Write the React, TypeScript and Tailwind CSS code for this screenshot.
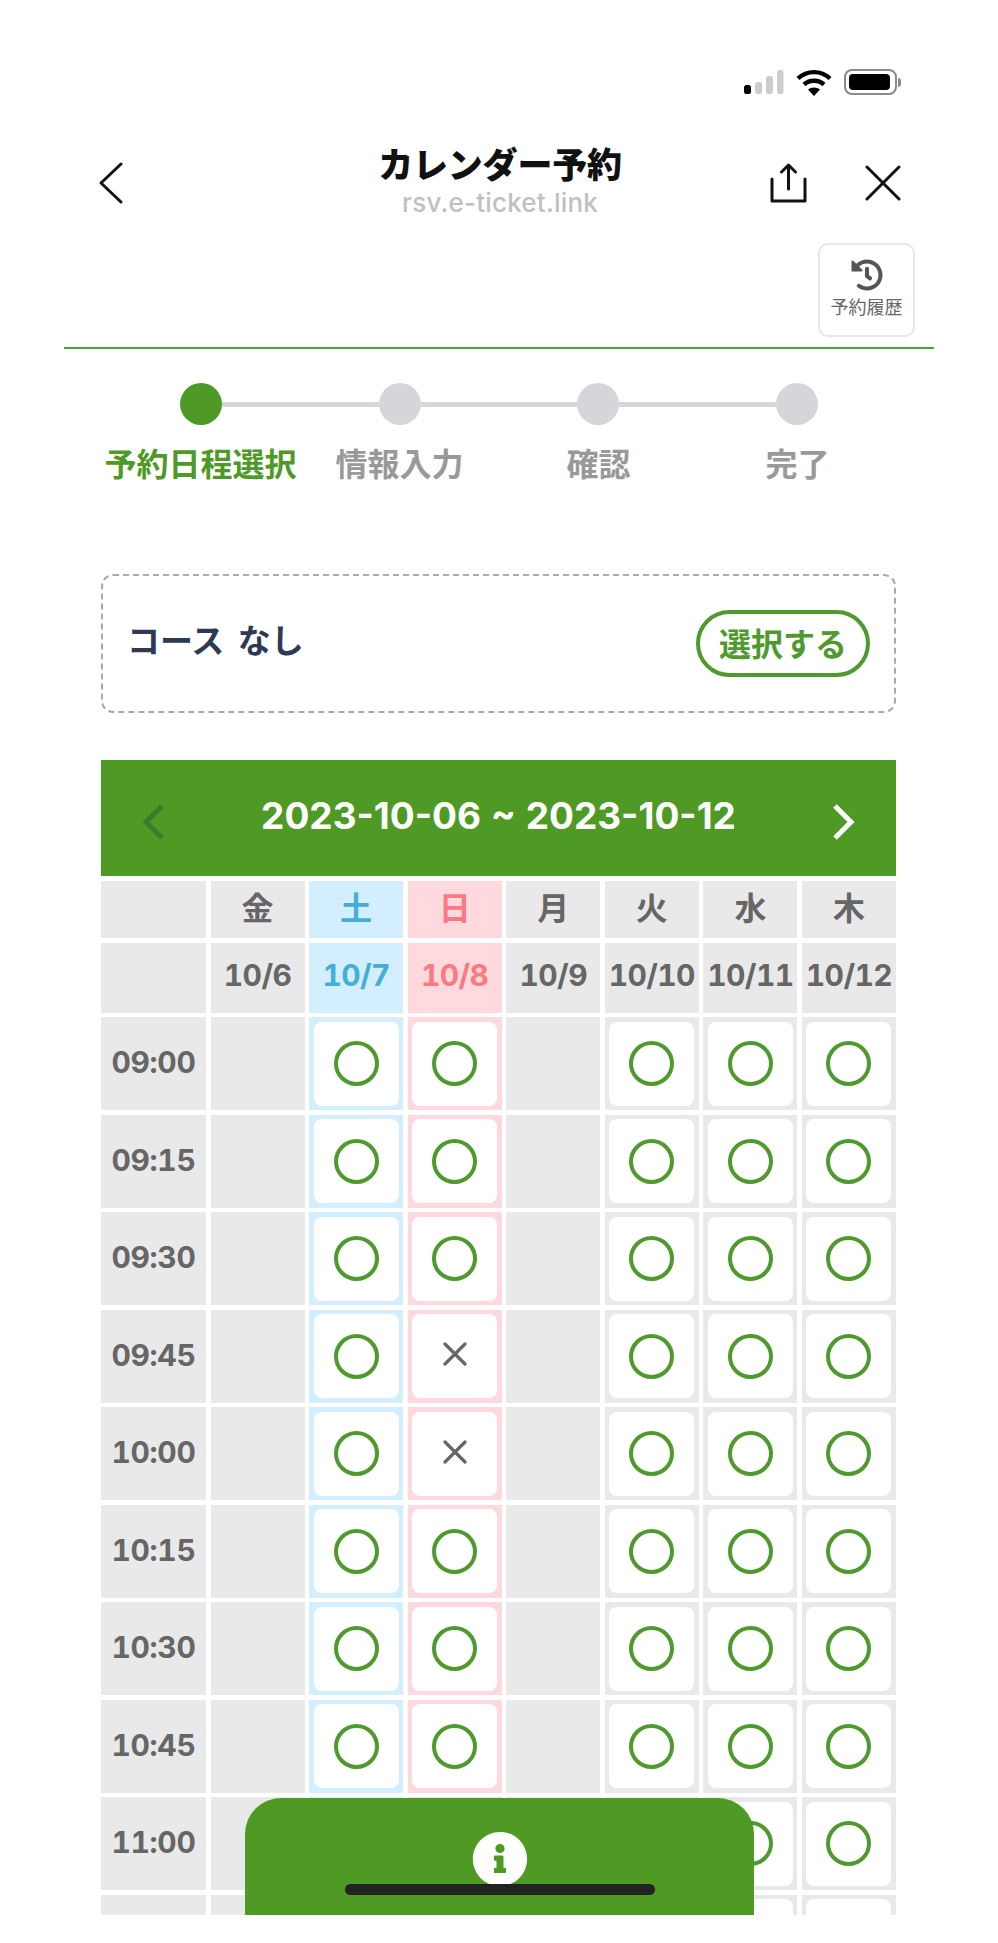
import { FaHistory, FaInfoCircle } from "react-icons/fa";

const FONT = "font-['Noto_Sans_CJK_JP','Noto_Sans',sans-serif]";
// latin-first stack for the digits in the calendar
const DIGITS = "font-['Inter','Noto_Sans_CJK_JP',sans-serif]";

const DAYS = [
  { label: "金", date: "10/6", tone: "gray", open: false },
  { label: "土", date: "10/7", tone: "blue", open: true },
  { label: "日", date: "10/8", tone: "pink", open: true },
  { label: "月", date: "10/9", tone: "gray", open: false },
  { label: "火", date: "10/10", tone: "gray", open: true },
  { label: "水", date: "10/11", tone: "gray", open: true },
  { label: "木", date: "10/12", tone: "gray", open: true },
] as const;

// the last row runs under the bottom edge, its label is never on screen
const TIMES = ["09:00", "09:15", "09:30", "09:45", "10:00", "10:15", "10:30", "10:45", "11:00", ""];
const FULL = ["10/8 09:45", "10/8 10:00"];

const STEPS = ["予約日程選択", "情報入力", "確認", "完了"];

const TONE = {
  gray: "bg-[#e9e9e9] text-[#666666]",
  blue: "bg-[#d2eeff] text-[#45aed6]",
  pink: "bg-[#ffd9dd] text-[#fb7a82]",
};

function StatusBar() {
  return (
    <div className="flex justify-end items-center gap-[12px] pt-[69px] pr-[97px] h-[95px]">
      <svg width="40" height="25" viewBox="0 0 40 25">
        <rect x="0" y="15" width="7" height="9" rx="2.5" fill="#000" />
        <rect x="11" y="12" width="7" height="12" rx="2.5" fill="#ccc" />
        <rect x="22" y="6" width="7" height="18" rx="2.5" fill="#ccc" />
        <rect x="33" y="0" width="6.5" height="24" rx="2.5" fill="#ccc" />
      </svg>
      <svg width="36" height="27" viewBox="0 0 36 27" fill="none" stroke="#000" strokeWidth="4.4">
        <path d="M2 9.5C11 1 25 1 34 9.5" />
        <path d="M8 15.5C13.5 10.5 22.5 10.5 28 15.5" />
        <path d="M18 27l-6-6.5c3.2-2.8 8.8-2.8 12 0z" fill="#000" stroke="none" />
      </svg>
      <div className="flex items-center gap-[1px]">
        <div className="w-[53px] h-[26px] rounded-[8px] border-2 border-[#8a8a8a] p-[3px]">
          <div className="h-full w-[41px] rounded-[4px] bg-black" />
        </div>
        <div className="w-[3px] h-[9px] rounded-r-full bg-[#8a8a8a]" />
      </div>
    </div>
  );
}

function NavBar() {
  return (
    <div className="grid grid-cols-[1fr_auto_1fr] items-start pl-[99px] pr-[97px] mt-[50px] h-[98px]">
      <svg className="mt-[17px]" width="24" height="42" viewBox="0 0 24 42" fill="none" stroke="#111" strokeWidth="3" strokeLinecap="round" strokeLinejoin="round">
        <path d="M22 2 2 21l20 19" />
      </svg>
      <div className="flex flex-col items-center -mt-[5px]">
        <div className="text-[35px] leading-[46px] font-black tracking-[-0.2px] text-[#111]">カレンダー予約</div>
        <div className="text-[26px] leading-[33px] font-medium text-[#c0c0c0] font-['Inter',sans-serif] tracking-[0.2px]">
          rsv.e-ticket.link
        </div>
      </div>
      <div className="flex justify-end items-start gap-[58px] pt-[18px]">
        <svg width="37" height="40" viewBox="0 0 37 40" fill="none" stroke="#111" strokeWidth="3" strokeLinecap="round" strokeLinejoin="round">
          <path d="M2 16v22h33V16" />
          <path d="M18.5 26V2M11.5 9l7-7 7 7" />
        </svg>
        <svg className="mt-[2px]" width="36" height="36" viewBox="0 0 36 36" fill="none" stroke="#111" strokeWidth="3" strokeLinecap="round">
          <path d="M2 2l32 32M34 2 2 34" />
        </svg>
      </div>
    </div>
  );
}

function Stepper() {
  return (
    <div className="px-[101px] mt-[34px]">
      <div className="flex items-center px-[79px]">
        {STEPS.map((_, i) => (
          <div key={i} className={i < 3 ? "flex items-center flex-1" : "flex items-center"}>
            <div className={`w-[42px] h-[42px] rounded-full shrink-0 ${i === 0 ? "bg-[#4f9a26]" : "bg-[#d6d6da]"}`} />
            {i < 3 && <div className="flex-1 h-[5px] bg-[#d6d6da]" />}
          </div>
        ))}
      </div>
      <div className="grid grid-cols-4 mt-[13px]">
        {STEPS.map((s, i) => (
          <div key={s} className={`text-center text-[32px] leading-[48px] font-bold whitespace-nowrap ${i === 0 ? "text-[#4f9a26]" : "text-[#999999]"}`}>
            {s}
          </div>
        ))}
      </div>
    </div>
  );
}

function Slot({ time, day }: { time: string; day: (typeof DAYS)[number] }) {
  const full = FULL.includes(`${day.date} ${time}`);
  return (
    <div className={`p-[4.5px] ${TONE[day.tone]}`}>
      {day.open && (
        <div className="h-full rounded-[8px] bg-white flex items-center justify-center">
          {full ? (
            <svg width="24" height="24" viewBox="0 0 24 24" fill="none" stroke="#666" strokeWidth="3.2" strokeLinecap="round" className="mb-[4px]">
              <path d="M2 2l20 20M22 2 2 22" />
            </svg>
          ) : (
            <div className="w-[45px] h-[45px] rounded-full border-[4.5px] border-[#4f9a2e]" />
          )}
        </div>
      )}
    </div>
  );
}

function Calendar() {
  return (
    <div className="ml-[101px] mr-[102px] mt-[47px]">
      <div className="h-[116px] bg-[#4f9a24] flex items-center justify-between px-[40px]">
        <svg className="mt-[8px]" width="24" height="36" viewBox="0 0 24 36" fill="none" stroke="#3f7a2c" strokeWidth="5">
          <path d="M21 2 5 18l16 16" />
        </svg>
        <div className={`text-[37px] leading-[50px] font-bold text-white mb-[5px] whitespace-nowrap [word-spacing:1px] ${DIGITS}`}>
          2023-10-06 ~ 2023-10-12
        </div>
        <svg className="mt-[8px]" width="24" height="36" viewBox="0 0 24 36" fill="none" stroke="#fff" strokeWidth="5">
          <path d="M3 2l16 16L3 34" />
        </svg>
      </div>
      <div className="grid grid-cols-[105px_repeat(7,1fr)] gap-[4.5px] mt-[5px] font-bold">
        <div className="h-[57px] bg-[#e9e9e9]" />
        {DAYS.map((d) => (
          <div key={d.label} className={`h-[57px] flex items-center justify-center text-[32px] pb-[8px] ${TONE[d.tone]}`}>
            {d.label}
          </div>
        ))}
        <div className="h-[70px] bg-[#e9e9e9]" />
        {DAYS.map((d) => (
          <div key={d.date} className={`h-[70px] flex items-center justify-center text-[30px] pb-[4px] tracking-[-0.6px] whitespace-nowrap tabular-nums ${DIGITS} ${TONE[d.tone]}`}>
            {d.date}
          </div>
        ))}
        {TIMES.map((t, i) => (
          <div key={i} className="contents">
            <div className={`h-[93px] flex items-center justify-center text-[30px] pb-[2px] tracking-[-0.3px] tabular-nums text-[#666666] bg-[#e9e9e9] ${DIGITS}`}>{t}</div>
            {DAYS.map((d) => (
              <Slot key={d.date} time={t} day={d} />
            ))}
          </div>
        ))}
      </div>
    </div>
  );
}

export default function App() {
  return (
    <div className={`w-[998px] h-[1943px] bg-white ${FONT}`}>
      <div className="relative h-[1915px] overflow-hidden">
        <StatusBar />
        <NavBar />
        <div className="flex justify-end pr-[83px]">
          <div className="w-[97px] h-[94px] rounded-[10px] border-2 border-[#e6e6e6] flex flex-col items-center pt-[14px]">
            <FaHistory className="text-[#555555]" size={32} />
            <div className="text-[18px] leading-[24px] mt-[3px] text-[#666666] whitespace-nowrap">予約履歴</div>
          </div>
        </div>
        <div className="mx-[64px] mt-[10px] h-[2px] bg-[#43a53f]" />
        <Stepper />

        <div className="ml-[101px] mr-[102px] mt-[88px] h-[139px] rounded-[12px] border-2 border-dashed border-[#aaaaaa] flex items-center justify-between pl-[24px] pr-[24px]">
          <div className="text-[33px] font-bold text-[#2d3a52] mb-[7px] [word-spacing:6px]">コース なし</div>
          <div className="h-[67px] px-[19px] pb-[4px] rounded-full border-[4.5px] border-[#4f9a2e] flex items-center text-[32px] font-bold text-[#4f9a2e]">
            選択する
          </div>
        </div>

        <Calendar />

        <div className="absolute left-[245px] top-[1798px] w-[509px] h-[140px] rounded-t-[36px] bg-[#4f9a24] flex justify-center pt-[33px]">
          <FaInfoCircle className="text-white" size={56} />
        </div>
        <div className="absolute left-[345px] top-[1884px] w-[310px] h-[11px] rounded-full bg-[#222222]" />
      </div>
    </div>
  );
}
